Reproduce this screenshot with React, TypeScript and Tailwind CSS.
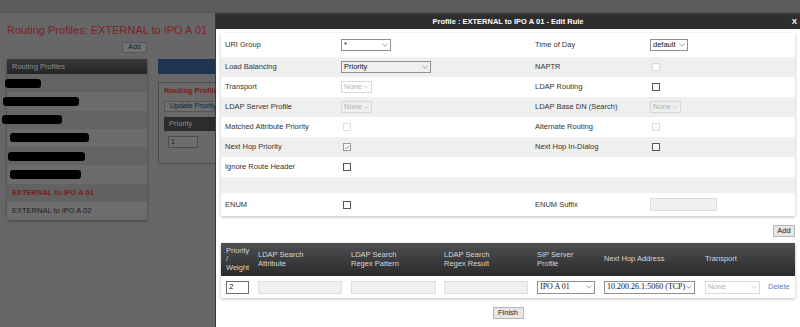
import { clsx } from "clsx";

const font = "font-['Liberation_Sans',Arial,sans-serif]";

function Chevron({ light }: { light?: boolean }) {
  return (
    <svg width="6" height="4" viewBox="0 0 6 4" className="shrink-0">
      <path
        d="M0.5 0.8 L3 3.2 L5.5 0.8"
        fill="none"
        stroke={light ? "#c8c8c8" : "#8a8a8a"}
        strokeWidth="0.8"
      />
    </svg>
  );
}

function Select({
  w,
  value,
  disabled,
  serif,
}: {
  w: string;
  value: string;
  disabled?: boolean;
  serif?: boolean;
}) {
  return (
    <div
      className={clsx(
        "flex h-[12px] items-center justify-between border pl-[2px] pr-[2px] text-[7.5px] leading-none",
        w,
        disabled
          ? "border-[#d8d8d8] text-[#b0b0b0]"
          : "border-[#8f8f8f] text-[#111]",
        serif && "font-['Liberation_Serif',serif] text-[8px]"
      )}
    >
      <span className="whitespace-nowrap">{value}</span>
      <Chevron light={disabled} />
    </div>
  );
}

function Check({ disabled, checked }: { disabled?: boolean; checked?: boolean }) {
  return (
    <div
      className={clsx(
        "ml-[2px] flex h-[8px] w-[8px] items-center justify-center border bg-white",
        disabled ? "border-[#dcdcdc]" : checked ? "border-[#9a9a9a]" : "border-[#555]"
      )}
    >
      {checked && (
        <svg width="7" height="7" viewBox="0 0 7 7">
          <path d="M1 3.6 L2.8 5.3 L6 1.4" fill="none" stroke="#777" strokeWidth="0.9" />
        </svg>
      )}
    </div>
  );
}

type Row = {
  label: string;
  control: React.ReactNode;
  rLabel: string;
  rControl: React.ReactNode;
  h: string;
};

const rows: Row[] = [
  {
    label: "URI Group",
    control: <Select w="w-[50px]" value="*" />,
    rLabel: "Time of Day",
    rControl: <Select w="w-[38px]" value="default" />,
    h: "h-[24px]",
  },
  {
    label: "Load Balancing",
    control: <Select w="w-[90px]" value="Priority" />,
    rLabel: "NAPTR",
    rControl: <Check disabled />,
    h: "h-[20px]",
  },
  {
    label: "Transport",
    control: <Select w="w-[31px]" value="None" disabled />,
    rLabel: "LDAP Routing",
    rControl: <Check />,
    h: "h-[20px]",
  },
  {
    label: "LDAP Server Profile",
    control: <Select w="w-[31px]" value="None" disabled />,
    rLabel: "LDAP Base DN (Search)",
    rControl: <Select w="w-[31px]" value="None" disabled />,
    h: "h-[20px]",
  },
  {
    label: "Matched Attribute Priority",
    control: <Check disabled />,
    rLabel: "Alternate Routing",
    rControl: <Check disabled />,
    h: "h-[20px]",
  },
  {
    label: "Next Hop Priority",
    control: <Check checked />,
    rLabel: "Next Hop In-Dialog",
    rControl: <Check />,
    h: "h-[20px]",
  },
  {
    label: "Ignore Route Header",
    control: <Check />,
    rLabel: "",
    rControl: null,
    h: "h-[20px]",
  },
  { label: "", control: null, rLabel: "", rControl: null, h: "h-[16px]" },
  {
    label: "ENUM",
    control: <Check />,
    rLabel: "ENUM Suffix",
    rControl: (
      <div className="h-[13px] w-[67px] border border-[#dcdcdc] bg-[#f0f0f0]" />
    ),
    h: "h-[23px]",
  },
];

const blobs = [
  "-ml-[2px] w-[36px]",
  "-ml-[4px] w-[76px]",
  "-ml-[5px] w-[60px]",
  "ml-[3px] w-[79px]",
  "ml-[1px] w-[77px]",
  "ml-[3px] w-[71px]",
];

function Button({ children, className }: { children: React.ReactNode; className?: string }) {
  return (
    <div
      className={clsx(
        "flex items-center justify-center border border-[#b5b5b5] bg-[#e6e6e6] text-[7.5px] leading-none text-[#222]",
        className
      )}
    >
      {children}
    </div>
  );
}

export default function App() {
  return (
    <div className={clsx("relative h-[327px] w-[800px] overflow-hidden bg-[#676767]", font)}>
      {/* dimmed page behind */}
      <div className="h-[13px] border-b border-[#555] bg-[#5c5c5c]" />
      <div className="pl-[7px]">
        <h1 className="mt-[10px] text-[11px] leading-[14px] text-[#7f1f23]">
          Routing Profiles: EXTERNAL to IPO A 01
        </h1>
        <div className="flex gap-[11px]">
          <div className="w-[140px]">
            <div className="mt-[5px] flex justify-end">
              <div className="flex h-[11px] w-[25px] items-center justify-center border border-[#575757] bg-[#727272] text-[7px] text-[#1c1c1c]">
                Add
              </div>
            </div>
            <div className="mt-[6px] shadow-[0_1px_3px_rgba(0,0,0,0.35)]">
              <div className="flex h-[15px] items-center bg-gradient-to-b from-[#3a3a3a] to-[#262626] pl-[5px] text-[7.5px] text-[#8c8c8c]">
                Routing Profiles
              </div>
              {blobs.map((b, i) => (
                <div
                  key={i}
                  className={clsx(
                    "flex h-[18.25px] items-center",
                    i % 2 === 0 ? "bg-[#636363]" : "bg-[#6b6b6b]"
                  )}
                >
                  <div className={clsx("h-[9px] rounded-[3px] bg-black blur-[0.4px]", b)} />
                </div>
              ))}
              <div className="flex h-[18.25px] items-center bg-[#626262] pl-[5px] text-[7.5px] font-bold text-[#7a1c1f]">
                EXTERNAL to IPO A 01
              </div>
              <div className="flex h-[18.25px] items-center bg-[#6c6c6c] pl-[5px] text-[7.5px] text-[#1e1e1e]">
                EXTERNAL to IPO A 02
              </div>
            </div>
          </div>
          <div className="w-[200px] pt-[22px]">
            <div className="h-[15px] bg-[#1f3450]" />
            <div className="mt-[8px] h-[82px] border border-[#4c4c4c] bg-[#696969] px-[5px] pt-[3px]">
              <div className="text-[7.5px] font-bold leading-[10px] text-[#7a1c1f]">
                Routing Profile
              </div>
              <div className="mt-[5px] flex h-[11px] w-[80px] items-center border border-[#555] bg-[#6f6f6f] pl-[5px] text-[7px] text-[#1c1c1c]">
                Update Priority
              </div>
              <div className="mt-[5px] flex h-[14px] items-center bg-[#2c2c2c] pl-[5px] text-[7.5px] text-[#8c8c8c]">
                Priority
              </div>
              <div className="mt-[5px] ml-[4px] flex h-[12px] w-[30px] items-center border border-[#4a4a4a] bg-[#6d6d6d] pl-[2px] text-[7px] text-[#1c1c1c]">
                1
              </div>
            </div>
          </div>
        </div>
      </div>

      {/* modal */}
      <div className="absolute bottom-0 left-[215px] right-0 top-[13px] border-l border-[#3b3b3b] bg-white">
        <div className="relative flex h-[16px] items-center justify-center border-t border-[#3a3a3a] bg-[#2e2e2e] text-[7.5px] font-bold text-white">
          Profile : EXTERNAL to IPO A 01 - Edit Rule
          <span className="absolute right-[3px] text-[8px]">X</span>
        </div>

        <div className="mx-[5px] mt-[4px] bg-white shadow-[0_1px_3px_rgba(0,0,0,0.28)]">
          {rows.map((r, i) => (
            <div
              key={i}
              className={clsx(
                "grid grid-cols-[116px_194px_115px_1fr] items-center pl-[4px] text-[7.5px] text-[#333]",
                r.h,
                i % 2 === 1 && "bg-[#efefef]"
              )}
            >
              <span>{r.label}</span>
              <div>{r.control}</div>
              <span>{r.rLabel}</span>
              <div>{r.rControl}</div>
            </div>
          ))}
        </div>

        <div className="mr-[5px] mt-[9px] flex justify-end">
          <Button className="h-[12px] w-[22px]">Add</Button>
        </div>

        <div className="mx-[5px] mt-[6px] bg-white shadow-[0_1px_3px_rgba(0,0,0,0.28)]">
          <div className="grid h-[33px] grid-cols-[32px_93px_93px_93px_67px_101px_63px_1fr] items-center bg-gradient-to-b from-[#4d4f52] to-[#2b2b2b] pl-[5px] text-[7.5px] leading-[8.6px] text-[#d6d6d6]">
            <span>
              Priority
              <br />/<br />
              Weight
            </span>
            <span>
              LDAP Search
              <br />
              Attribute
            </span>
            <span>
              LDAP Search
              <br />
              Regex Pattern
            </span>
            <span>
              LDAP Search
              <br />
              Regex Result
            </span>
            <span>
              SIP Server
              <br />
              Profile
            </span>
            <span>Next Hop Address</span>
            <span>Transport</span>
            <span />
          </div>
          <div className="grid h-[22px] grid-cols-[32px_93px_93px_93px_67px_101px_63px_1fr] items-center pl-[5px] text-[7.5px]">
            <div className="flex h-[13px] w-[23px] items-center border border-[#6a6a6a] pl-[2px] text-[8px] text-[#111]">
              2
            </div>
            <div className="h-[13px] w-[84px] border border-[#dedede] bg-[#f0f0f0]" />
            <div className="h-[13px] w-[85px] border border-[#dedede] bg-[#f0f0f0]" />
            <div className="h-[13px] w-[84px] border border-[#dedede] bg-[#f0f0f0]" />
            <div className="[&>div]:h-[13px]">
              <Select w="w-[58px]" value="IPO A 01" serif />
            </div>
            <div className="[&>div]:h-[13px]">
              <Select w="w-[91px]" value="10.200.26.1:5060 (TCP)" serif />
            </div>
            <div className="[&>div]:h-[13px]">
              <Select w="w-[55px]" value="None" disabled />
            </div>
            <span className="text-[#5b84b8]">Delete</span>
          </div>
        </div>

        <div className="mt-[9px] flex justify-center">
          <Button className="h-[12px] w-[31px]">Finish</Button>
        </div>
      </div>
    </div>
  );
}
